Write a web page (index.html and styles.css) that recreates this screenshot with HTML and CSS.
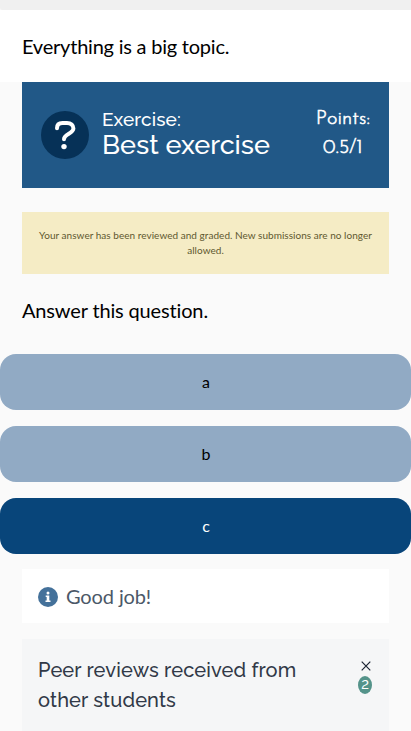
FILE: index.html
```html
<!DOCTYPE html>
<html lang="en">
<head>
<meta charset="utf-8">
<title>Exercise</title>
<link rel="stylesheet" href="styles.css">
</head>
<body>
<div class="topbar"></div>
<p class="intro">Everything is a big topic.</p>
<main>
  <header class="exercise">
    <svg class="exercise-icon" viewBox="0 0 48 48" aria-hidden="true">
      <circle cx="24" cy="24" r="24" fill="#063157"/>
      <path d="M16 17.2C16 13.6 18 12 21.5 12H26C30 12 32.4 14.3 32.4 17.5C32.4 22.8 23 22.5 23 28.2" fill="none" stroke="#fff" stroke-width="4" stroke-linecap="round"/>
      <circle cx="23" cy="35.6" r="2.7" fill="#fff"/>
    </svg>
    <h2 class="exercise-heading"><span class="label">Exercise:</span><span class="name">Best exercise</span></h2>
    <div class="points"><span class="points-label">Points:</span><span class="score">0.5/1</span></div>
  </header>
  <div class="notice">Your answer has been reviewed and graded. New submissions are no longer allowed.</div>
  <p class="question">Answer this question.</p>
  <div class="options">
    <button class="option">a</button>
    <button class="option">b</button>
    <button class="option selected">c</button>
  </div>
  <div class="feedback">
    <svg class="info" viewBox="0 0 20 20" aria-hidden="true">
      <circle cx="10" cy="10" r="10" fill="#44719a"/>
      <circle cx="10" cy="6" r="1.5" fill="#fff"/>
      <path d="M7.7 8.4H11.3V13.4H12.5V15H7.5V13.4H8.7V10H7.7Z" fill="#fff"/>
    </svg>
    <span>Good job!</span>
  </div>
  <section class="reviews">
    <h3 class="reviews-title">Peer reviews received from other students</h3>
    <div class="reviews-side">
      <svg class="close" viewBox="0 0 10 10" aria-hidden="true"><path d="M.7.7L9.3 9.3M9.3.7L.7 9.3" stroke="#1a2333" stroke-width="1.2"/></svg>
      <span class="count">2</span>
    </div>
  </section>
</main>
</body>
</html>
```
FILE: styles.css
```css
* { box-sizing: border-box; }
html { overflow: hidden; }
body { margin: 0; height: 731px; overflow: hidden; background: #fafafa; color: #000; font: 20px/32px Lato, sans-serif; }
p, h2, h3 { margin: 0; font-weight: 400; }
.topbar { height: 10px; background: #f0f0f0; border-bottom-left-radius: 2px; }
.intro { height: 72px; padding: 20px 22px 0; background: #fff; letter-spacing: -.22px; }
.exercise { display: flex; align-items: center; height: 106px; margin: 0 22px; padding: 0 18px 0 19px; background: #215887; color: #fff; }
.exercise-icon { width: 48px; height: 48px; flex: none; }
.exercise-heading { display: flex; flex-direction: column; flex: 1; margin: -2px 0 0 13px; font-family: Raleway, Lato, sans-serif; font-weight: 500; white-space: nowrap; }
.label { font-size: 19px; line-height: 22px; letter-spacing: .1px; }
.name { font-size: 27px; line-height: 30px; }
.points { display: flex; flex-direction: column; align-items: center; margin: -2px 1px 0 0; font: 300 20px/29px "Josefin Sans", Lato, sans-serif; -webkit-text-stroke: .6px #fff; }
.points-label { letter-spacing: .1px; }
.notice { height: 62px; margin: 24px 22px 0; padding: 16px 15px 0 15px; background: #f5ecc5; color: #5e582f; font-size: 10px; line-height: 15px; letter-spacing: .035px; text-align: center; }
.question { margin: 20px 22px 0; letter-spacing: -.15px; }
.options { display: flex; flex-direction: column; gap: 16px; margin-top: 28px; }
.option { height: 56px; padding: 0 0 0 1px; border: 0; border-radius: 16px; background: #91aac4; color: #000; font: 16px/24px Lato, sans-serif; }
.option.selected { background: #08457a; color: #fff; }
.feedback { display: flex; align-items: center; gap: 8px; height: 54px; margin: 15px 22px 16px; padding: 2px 16px 0; background: #fff; color: #4c5868; }
.feedback span { margin-top: -2px; letter-spacing: -.12px; }
.info { width: 20px; height: 20px; }
.reviews { display: flex; height: 120px; margin: 0 22px; padding: 16px; background: #f5f6f7; color: #313947; }
.reviews-title { flex: 1; padding-right: 40px; font: 500 20px/30px Raleway, Lato, sans-serif; letter-spacing: .14px; }
.reviews-side { display: flex; flex-direction: column; align-items: center; width: 14px; margin: 5px 1px 0 0; }
.close { width: 10px; height: 10px; margin: 1px 0 0 2px; }
.count { width: 14px; height: 18px; margin-top: 5px; border-radius: 50%; background: #54938a; color: #fff; font: 500 13px/18px Raleway, Lato, sans-serif; font-variant-numeric: lining-nums; text-align: center; }
```
